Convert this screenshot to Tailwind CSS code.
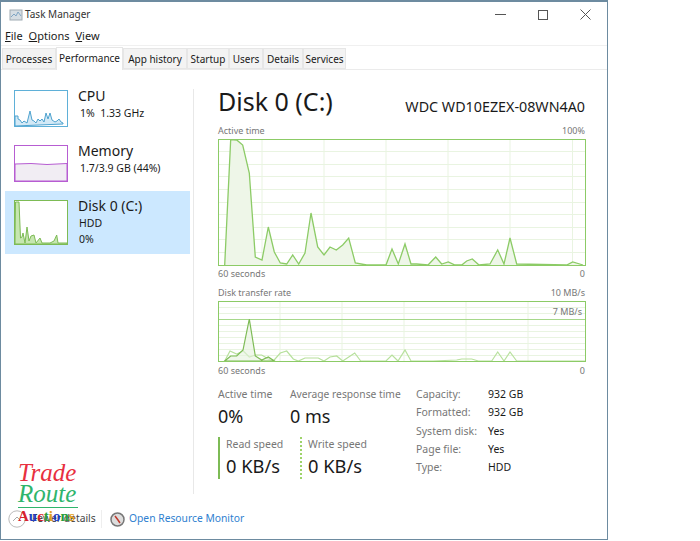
<!DOCTYPE html>
<html lang="en">
<head>
<meta charset="UTF-8">
<title>Task Manager</title>
<script src="https://cdn.jsdelivr.net/npm/@tailwindcss/browser@4"></script>
</head>
<body class="bg-white font-['Noto_Sans',sans-serif] text-[#1a1a1a] overflow-hidden">

<div class="relative w-[608px] h-[540px] border border-t-2 border-[#6d8ba0] flex flex-col overflow-hidden">

  <!-- title bar -->
  <div class="h-[25px] flex items-center shrink-0">
    <svg class="ml-[8px] w-[14px] h-[14px]" viewBox="0 0 14 14"><rect x="1" y="2" width="12" height="10" fill="#d5dde3" stroke="#a0abb3"/><path d="M2 9l3-3 2 2 2-4 3 4" fill="none" stroke="#7fa5c4"/></svg>
    <span class="ml-[2px] text-[10px] text-[#333]">Task Manager</span>
    <div class="ml-auto flex items-center">
      <span class="w-[11px] h-px bg-[#555] mr-[32px]"></span>
      <span class="w-[10px] h-[10px] border border-[#555] mr-[32px]"></span>
      <svg class="w-[11px] h-[11px] mr-[16px]" viewBox="0 0 11 11"><path d="M.5.5l10 10M10.5.5l-10 10" stroke="#555"/></svg>
    </div>
  </div>

  <!-- menu -->
  <div class="h-[18px] mt-[1px] flex items-center gap-[6px] pl-[4px] text-[11px] shrink-0 border-b border-[#f0f0f0]">
    <span><u>F</u>ile</span><span><u>O</u>ptions</span><span><u>V</u>iew</span>
  </div>

  <!-- tabs -->
  <div class="h-[24px] flex items-end pl-[1px] border-b border-[#ebebeb] text-[10px] shrink-0">
    <div class="w-[54px] h-[21px] bg-[#f3f3f3] border border-[#e6e6e6] text-center leading-[21px]">Processes</div>
    <div class="w-[67px] h-[23px] bg-white border-x border-t border-[#e6e6e6] text-center leading-[21px] -mb-px">Performance</div>
    <div class="w-[64px] h-[21px] bg-[#f3f3f3] border border-[#e6e6e6] text-center leading-[21px]">App history</div>
    <div class="w-[42px] h-[21px] bg-[#f3f3f3] border border-[#e6e6e6] text-center leading-[21px]">Startup</div>
    <div class="w-[34px] h-[21px] bg-[#f3f3f3] border border-[#e6e6e6] text-center leading-[21px]">Users</div>
    <div class="w-[40px] h-[21px] bg-[#f3f3f3] border border-[#e6e6e6] text-center leading-[21px]">Details</div>
    <div class="w-[43px] h-[21px] bg-[#f3f3f3] border border-[#e6e6e6] text-center leading-[21px]">Services</div>
  </div>

  <!-- body -->
  <div class="flex pt-[19px] h-[424px] shrink-0">

    <!-- sidebar -->
    <div class="w-[193px] h-[405px] border-r border-[#e8e8e8] shrink-0 pl-[4px] pr-[4px] flex flex-col">
      <div class="h-[37px] flex pl-[9px] mt-[1px]">
        <svg class="w-[54px] h-[37px] shrink-0" viewBox="0 0 54 37"><rect x=".5" y=".5" width="53" height="36" fill="#fff" stroke="#5fb0d8"/><path d="M1 36V26h3v3l2 1 2 3 2-2 3 2 3-12 2 9 2 1 2 2 2-4 2 2 2-2 2 3 2-9 2 6 2-6 2 7 3 2 2-1 2-2 2 3 2 1v1z" fill="#d3e9f6" stroke="#4fa3cf"/></svg>
        <div class="ml-[10px]">
          <div class="text-[14px] leading-[14px] mt-[-1px]">CPU</div>
          <div class="text-[10.500px] leading-[14px] mt-[3px] ml-[2px]">1%&nbsp; 1.33 GHz</div>
        </div>
      </div>
      <div class="h-[37px] flex pl-[9px] mt-[18px]">
        <svg class="w-[54px] h-[37px] shrink-0" viewBox="0 0 54 37"><rect x=".5" y=".5" width="53" height="36" fill="#fff" stroke="#b75dd2"/><path d="M1 36V19l16-.5 16 1 20-1V36z" fill="#f1edf3" stroke="#b75dd2"/></svg>
        <div class="ml-[10px]">
          <div class="text-[14px] leading-[14px] mt-[-1px]">Memory</div>
          <div class="text-[10.500px] leading-[14px] mt-[3px] ml-[2px]">1.7/3.9 GB (44%)</div>
        </div>
      </div>
      <div class="h-[63px] mt-[9px] w-[185px] bg-[#cce8ff] flex pl-[9px] pt-[9px]">
        <svg class="w-[54px] h-[45px] shrink-0" viewBox="0 0 54 45"><rect x=".5" y=".5" width="53" height="44" fill="#fff" stroke="#7dbb55"/><path d="M1 44L1.500 2H5L6.500 38 8 37 9 33 11 43 13 27 15 41 17 36 20 35 22 43 26 38 28 43H36L40 41 42.700 35 44 43H53V44z" fill="#c6e6b0" stroke="#7dbb55"/></svg>
        <div class="ml-[10px]">
          <div class="text-[14px] leading-[14px] mt-[-1px]">Disk 0 (C:)</div>
          <div class="text-[10.500px] leading-[14px] mt-[3px] ml-[1px]">HDD</div>
          <div class="text-[10.500px] leading-[14px] mt-[2px] ml-[1px]">0%</div>
        </div>
      </div>
    </div>

    <!-- main -->
    <div class="pl-[24px] w-[391px] shrink-0">
      <div class="flex justify-between items-end h-[28px] mt-[-2px]">
        <span class="text-[25px] leading-[28px] whitespace-nowrap">Disk 0 (C:)</span>
        <span class="text-[14.300px] leading-[18px] mb-[-1px] whitespace-nowrap">WDC WD10EZEX-08WN4A0</span>
      </div>

      <div class="flex justify-between text-[9px] leading-[12px] text-[#777] mt-[10px]">
        <span>Active time</span><span>100%</span>
      </div>
      <svg class="block mt-[2px] w-[368px] h-[127px]" viewBox="218 139 368 127">
        <g stroke="#e9f4e1" fill="none">
          <path d="M218 151.500H585M218 164.500H585M218 176.500H585M218 189.500H585M218 202.500H585M218 214.500H585M218 227.500H585M218 239.500H585M218 252.500H585"/>
          <path d="M262 139V265M324 139V265M386 139V265M448 139V265M510 139V265M572.500 139V265"/>
        </g>
        <path d="M224.700 265L230.700 139.500 236.700 140 242.700 145 249.300 173 255.300 257 262 260 268.300 227 274.300 252 280.300 263 286.700 264 292.700 255 298.700 264 305 253 311 213 317.700 247 324 255 330 247 336.300 250 342.700 245 348.700 238 355.300 263 366.700 265 386 265 392 249 398.300 264 405 244 411 264 416.700 264 428 265 435.700 257 441.700 264 448.300 262 455 265 461.700 265 466.700 261 472.300 259 479 265 490 264 497.700 250 504 264 510 238 516.700 264 566.700 265 572.700 262 583 265" fill="#eef6e8" stroke="#8ccb66" stroke-width="1.300"/>
        <rect x="218.500" y="139.500" width="367" height="126" fill="none" stroke="#8ccb66"/>
      </svg>
      <div class="flex justify-between text-[9px] leading-[12px] text-[#777] mt-[2px]">
        <span>60 seconds</span><span>0</span>
      </div>

      <div class="flex justify-between text-[9px] leading-[12px] text-[#777] mt-[7px]">
        <span>Disk transfer rate</span><span>10 MB/s</span>
      </div>
      <div class="relative mt-[2px] w-[368px] h-[62px]">
        <svg class="block w-[368px] h-[62px]" viewBox="218 301 368 62">
          <g stroke="#e9f4e1" fill="none">
            <path d="M218 307.500H585M218 313.500H585M218 325.500H585M218 331.500H585M218 337.500H585M218 343.500H585M218 349.500H585M218 355.500H585"/>
            <path d="M280 301V362M342 301V362M404 301V362M466 301V362M528 301V362"/>
          </g>
          <path d="M218 319.500H585" stroke="#a6d88a" fill="none"/>
          <path d="M224.700 361L230 351 236.700 354 243.300 351 249.300 357 255.300 355 261.700 355 268.300 359 273.300 361 280.300 353 286.700 351 293.300 359 298.300 361 305 358 311.700 358 318.300 358 324 361 330 357 336.700 356 342.700 361 354.700 353 360.700 361 386 361 392 355 398 361 405 350 411 361 433 361 456.700 360 461.700 359 471.700 359 478.300 361 491.700 361 497.700 352 504 361 510 352 516.700 361 585 361" fill="none" stroke="#b7e09c" stroke-width="1.200"/>
          <path d="M224.700 361L230.700 356 236.700 356 243 350 249.300 319 255.300 356 261.700 360 268.300 357 274.300 361z" fill="#e6f2dd" fill-opacity=".6" stroke="#7dbb55" stroke-width="1.200"/>
          <rect x="218.500" y="301.500" width="367" height="60" fill="none" stroke="#8ccb66"/>
        </svg>
        <span class="absolute right-[4px] top-[5px] text-[9px] leading-[12px] text-[#777]">7 MB/s</span>
      </div>
      <div class="flex justify-between text-[9px] leading-[12px] text-[#777] mt-[2px]">
        <span>60 seconds</span><span>0</span>
      </div>

      <!-- stats -->
      <div class="flex mt-[10px]">
        <div class="w-[198px] shrink-0">
          <div class="flex">
            <div class="w-[72px]">
              <div class="text-[10.500px] leading-[14px] text-[#777]">Active time</div>
              <div class="text-[18px] leading-[24px] mt-[3px]">0%</div>
            </div>
            <div>
              <div class="text-[10.250px] leading-[14px] text-[#777] whitespace-nowrap">Average response time</div>
              <div class="text-[18px] leading-[24px] mt-[3px]">0 ms</div>
            </div>
          </div>
          <div class="flex mt-[9px]">
            <div class="w-[82px] h-[42px] border-l-2 border-[#7dbb55] pl-[6px]">
              <div class="text-[10.500px] leading-[14px] text-[#777]">Read speed</div>
              <div class="text-[18.300px] leading-[24px] mt-[3px]">0 KB/s</div>
            </div>
            <div class="h-[42px] border-l-2 border-dotted border-[#9ed36a] pl-[6px]">
              <div class="text-[10.500px] leading-[14px] text-[#777]">Write speed</div>
              <div class="text-[18.300px] leading-[24px] mt-[3px]">0 KB/s</div>
            </div>
          </div>
        </div>
        <div class="grid grid-cols-[72px_auto] auto-rows-[18.250px] text-[10.500px] leading-[18px] mt-[-2px]">
          <span class="text-[#777]">Capacity:</span><span>932 GB</span>
          <span class="text-[#777]">Formatted:</span><span>932 GB</span>
          <span class="text-[#777]">System disk:</span><span>Yes</span>
          <span class="text-[#777]">Page file:</span><span>Yes</span>
          <span class="text-[#777]">Type:</span><span>HDD</span>
        </div>
      </div>
    </div>
  </div>

  <!-- footer -->
  <div class="flex items-center h-[30px] pl-[7px] text-[10.300px] mt-[10px]">
    <svg class="w-[18px] h-[18px]" viewBox="0 0 18 18"><circle cx="9" cy="9" r="8.200" fill="#fff" stroke="#bbb"/><path d="M5 11l4-4 4 4" fill="none" stroke="#aaa"/></svg>
    <span class="ml-[6px] w-[62px] text-[#444] whitespace-nowrap">Fewer details</span>
    <span class="ml-[7px] w-px h-[18px] bg-[#eee]"></span>
    <svg class="ml-[8px] w-[15px] h-[15px]" viewBox="0 0 15 15"><circle cx="7.500" cy="7.500" r="6.500" fill="#ddd" stroke="#777" stroke-width="1.500"/><path d="M5 4l3 4 2 3" stroke="#c0392b" stroke-width="1.500" fill="none"/></svg>
    <span class="ml-[4px] text-[#2f7fd0] whitespace-nowrap">Open Resource Monitor</span>
  </div>

  <!-- watermark logo -->
  <div class="absolute left-[17px] top-[460px] w-[60px] font-['Liberation_Serif',serif] italic text-[25px] leading-[21px]">
    <div class="text-[#e8303f]">Trade</div>
    <div class="text-[#2fb56c] border-b border-[#2fb56c] pb-[3px]">Route</div>
    <div class="not-italic font-bold text-[15px] leading-[14px] mt-[1px] whitespace-nowrap"><span class="text-[#d9202c]">A</span><span class="text-[#1f3fc0]">u</span><span class="text-[#d9202c]">c</span><span class="text-[#2a9d3c]">t</span><span class="text-[#e0a020]">i</span><span class="text-[#1f3fc0]">o</span><span class="text-[#2a9d3c]">n</span><span class="text-[#e0a020]">s</span></div>
  </div>
</div>

</body>
</html>
